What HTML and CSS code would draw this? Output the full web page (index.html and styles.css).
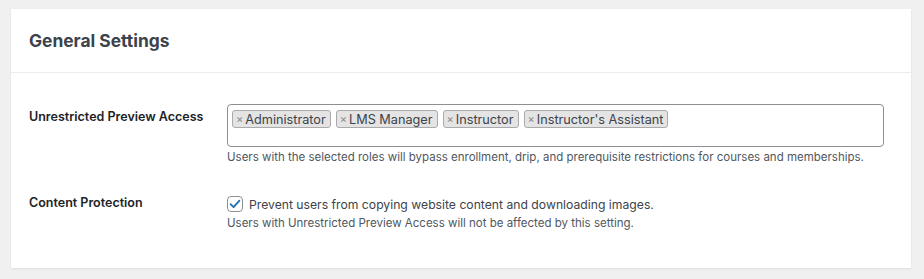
FILE: index.html
```html
<!DOCTYPE html>
<html lang="en">

<head>
    <meta charset="UTF-8">
    <meta name="viewport" content="width=device-width, initial-scale=1.0">
    <title>General Settings</title>
    <link rel="stylesheet" href="styles.css">
</head>

<body>
    <div class="card">
        <div class="card-header">
            <h2>General Settings</h2>
        </div>
        <div class="card-body">
            <div class="setting-row">
                <label class="setting-label">Unrestricted Preview Access</label>
                <div class="setting-field">
                    <div class="tag-select">
                        <span class="tag"><span class="tag-remove">×</span>Administrator</span>
                        <span class="tag"><span class="tag-remove">×</span>LMS Manager</span>
                        <span class="tag"><span class="tag-remove">×</span>Instructor</span>
                        <span class="tag"><span class="tag-remove">×</span>Instructor's Assistant</span>
                    </div>
                    <p class="description">Users with the selected roles will bypass enrollment, drip, and prerequisite restrictions for courses and memberships.</p>
                </div>
            </div>
            <div class="setting-row">
                <label class="setting-label">Content Protection</label>
                <div class="setting-field">
                    <label class="checkbox-line">
                        <span class="checkbox">
                            <svg width="14" height="14" viewBox="0 0 14 14"><path d="M2.6 7.2 L5.6 10.2 L11.4 3.6" fill="none" stroke="#2271b1" stroke-width="1.8" stroke-linecap="round" stroke-linejoin="round"/></svg>
                        </span>
                        Prevent users from copying website content and downloading images.
                    </label>
                    <p class="description second">Users with Unrestricted Preview Access will not be affected by this setting.</p>
                </div>
            </div>
        </div>
    </div>
</body>

</html>
```

FILE: styles.css
```css
body {
    margin: 0;
    background-color: #f0f0f1;
    font-family: Inter, "Noto Sans", sans-serif;
    color: #1d2327;
    padding: 9px 13px 11px 11px;
}

.card {
    background-color: #fff;
    height: 259px;
    box-shadow: 0 1px 2px rgba(0, 0, 0, 0.08);
}

.card-header {
    height: 63px;
    border-bottom: 1px solid #ececec;
    display: flex;
    align-items: center;
    padding-left: 18px;
}

.card-header h2 {
    margin: 0;
    font-size: 17.4px;
    font-weight: 700;
    color: #3c434a;
}

.card-body {
    padding: 31px 0 0 18px;
}

.setting-row {
    display: grid;
    grid-template-columns: 198px 1fr;
    margin-bottom: 26px;
}

.setting-label {
    font-size: 12.5px;
    font-weight: 600;
    padding-top: 5px;
}

.setting-field {
    width: 657px;
}

.tag-select {
    border: 1px solid #8c8f94;
    border-radius: 4px;
    padding: 5px 4px 0;
    height: 36px;
    display: flex;
    align-items: flex-start;
    gap: 5px;
}

.tag {
    display: inline-flex;
    align-items: center;
    height: 16px;
    padding: 0 4px 0 3px;
    border: 1px solid #aaa;
    border-radius: 3px;
    background-color: #e4e4e4;
    font-size: 12.7px;
    color: #3c434a;
}

.tag-remove {
    color: #888;
    font-size: 11px;
    margin-right: 2px;
}

.description {
    margin: 3px 0 0;
    font-size: 11.5px;
    color: #50575e;
}

.description.second {
    margin-top: 4px;
}

.checkbox-line {
    display: flex;
    align-items: center;
    gap: 6px;
    font-size: 12.2px;
    color: #3c434a;
    padding-top: 6px;
}

.checkbox {
    width: 14px;
    height: 14px;
    border: 1px solid #8c8f94;
    border-radius: 4px;
    display: inline-flex;
    align-items: center;
    justify-content: center;
}
```
